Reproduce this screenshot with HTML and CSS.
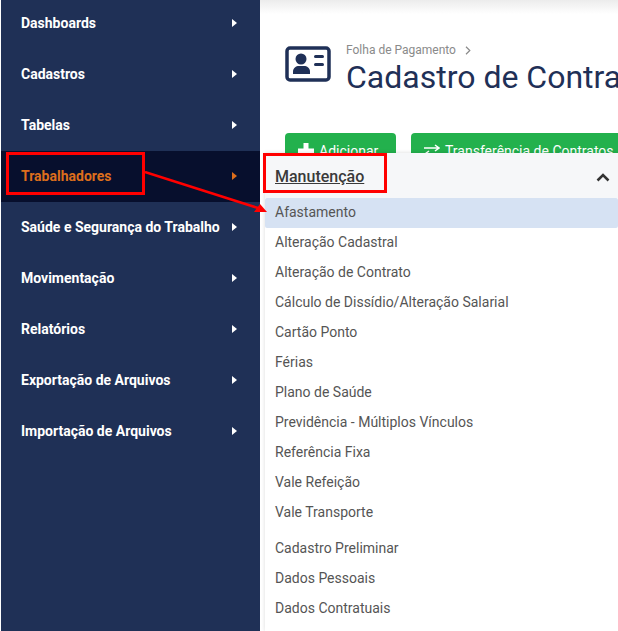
FILE: index.html
```html
<!DOCTYPE html>
<html lang="en">
<head>
  <meta charset="UTF-8" />
  <title>Cadastro de Contratos</title>
  <link rel="stylesheet" href="styles.css">
</head>
<body>
  <div class="page">
    <aside class="sidebar">
      <a class="side-item" href="#"><span>Dashboards</span><i class="caret"></i></a>
      <a class="side-item" href="#"><span>Cadastros</span><i class="caret"></i></a>
      <a class="side-item" href="#"><span>Tabelas</span><i class="caret"></i></a>
      <a class="side-item active" href="#"><span>Trabalhadores</span><i class="caret"></i></a>
      <a class="side-item" href="#"><span>Saúde e Segurança do Trabalho</span><i class="caret"></i></a>
      <a class="side-item" href="#"><span>Movimentação</span><i class="caret"></i></a>
      <a class="side-item" href="#"><span>Relatórios</span><i class="caret"></i></a>
      <a class="side-item" href="#"><span>Exportação de Arquivos</span><i class="caret"></i></a>
      <a class="side-item" href="#"><span>Importação de Arquivos</span><i class="caret"></i></a>
    </aside>

    <main class="content">
      <div class="topbar"></div>
      <div class="page-head">
        <svg class="head-icon" width="46" height="36" viewBox="0 0 46 36">
          <rect x="2" y="2" width="42" height="32" rx="3" fill="none" stroke="#1f3057" stroke-width="3.500"/>
          <circle cx="16" cy="13" r="5.500" fill="#1f3057"/>
          <path d="M8 28v-2.500c0-3.500 3-5.500 6-5.500h5c3 0 6 2 6 5.500V28z" fill="#1f3057"/>
          <rect x="29" y="9" width="10" height="3" rx="1.500" fill="#1f3057"/>
          <rect x="29" y="17" width="10" height="3" rx="1.500" fill="#1f3057"/>
        </svg>
        <div class="head-text">
          <div class="crumb">
            <span>Folha de Pagamento</span>
            <svg width="6" height="9" viewBox="0 0 6 9"><path d="M1 .8L4.800 4.500 1 8.200" fill="none" stroke="#8a8a8a" stroke-width="1.200"/></svg>
          </div>
          <h1>Cadastro de Contratos</h1>
        </div>
      </div>
      <div class="actions">
        <button class="btn btn-add">
          <svg width="16" height="16" viewBox="0 0 16 16"><path d="M8 0v16M0 8h16" stroke="#fff" stroke-width="5"/></svg>
          Adicionar
        </button>
        <button class="btn btn-transfer">
          <svg width="16" height="16" viewBox="0 0 16 16"><path d="M0 5h14M11 2l4 3-4 3M16 11H2M5 8l-4 3 4 3" fill="none" stroke="#fff" stroke-width="1.500"/></svg>
          Transferência de Contratos
        </button>
      </div>

      <div class="dropdown">
        <div class="drop-head">
          <span>Manutenção</span>
          <svg class="drop-chevron" width="14" height="9" viewBox="0 0 14 9"><path d="M1.500 7.500L7 2l5.500 5.500" fill="none" stroke="#333" stroke-width="2.500"/></svg>
        </div>
        <ul class="drop-list">
          <li class="selected">Afastamento</li>
          <li>Alteração Cadastral</li>
          <li>Alteração de Contrato</li>
          <li>Cálculo de Dissídio/Alteração Salarial</li>
          <li>Cartão Ponto</li>
          <li>Férias</li>
          <li>Plano de Saúde</li>
          <li>Previdência - Múltiplos Vínculos</li>
          <li>Referência Fixa</li>
          <li>Vale Refeição</li>
          <li>Vale Transporte</li>
        </ul>
        <ul class="drop-list second">
          <li>Cadastro Preliminar</li>
          <li>Dados Pessoais</li>
          <li>Dados Contratuais</li>
        </ul>
      </div>
    </main>
  </div>

  <!-- marcações vermelhas por cima da tela -->
  <div class="mark mark-side"></div>
  <div class="mark mark-drop"></div>
  <svg class="mark-arrow" width="130" height="50" viewBox="0 0 130 50">
    <path d="M1 1L114 37" fill="none" stroke="#f00" stroke-width="2.500"/>
    <path d="M123 41L110 41L116 33z" fill="#f00"/>
  </svg>
</body>
</html>
```

FILE: styles.css
```css
* {
  box-sizing: border-box;
}
body {
  margin: 0;
  font-family: Roboto, sans-serif;
  background: white;
  overflow: hidden;
}
.page {
  display: flex;
  height: 631px;
}
.sidebar {
  width: 259px;
  margin-left: 1px;
  flex: none;
  background: #1f3056;
}
.side-item {
  display: flex;
  justify-content: space-between;
  align-items: center;
  height: 51px;
  padding: 0 23px 2px 20px;
  color: white;
  font-size: 14px;
  font-weight: 700;
  text-decoration: none;
}
.side-item:first-child {
  height: 49px;
  padding-bottom: 3px;
}
.side-item.active {
  background: #070f2d;
  color: #dd6e1c;
}
.caret {
  width: 0;
  height: 0;
  border-left: 5px solid currentColor;
  border-top: 4px solid transparent;
  border-bottom: 4px solid transparent;
}
.content {
  flex: 1;
  min-width: 0;
  position: relative;
  overflow: hidden;
}
.topbar {
  height: 14px;
  background: linear-gradient(#ececec, #fff);
}
.page-head {
  display: flex;
  gap: 15px;
  margin: 29px 0 0 25px;
  height: 40px;
}
.head-icon {
  flex: none;
  margin-top: 3px;
}
.crumb {
  display: flex;
  align-items: center;
  gap: 9px;
  font-size: 12px;
  line-height: 14px;
  color: #8a8a8a;
}
h1 {
  margin: 1px 0 0;
  font-size: 32px;
  font-weight: 400;
  line-height: 38px;
  color: #1f3057;
  white-space: nowrap;
}
.actions {
  display: flex;
  gap: 15px;
  margin: 50px 0 0 25px;
}
.btn {
  display: flex;
  flex: none;
  align-items: center;
  gap: 5px;
  height: 36px;
  padding: 0 13px;
  border: none;
  border-radius: 4px;
  background: #23b14d;
  color: white;
  font-family: Roboto, sans-serif;
  font-size: 14px;
  white-space: nowrap;
}
.btn-add {
  width: 111px;
}
.dropdown {
  position: absolute;
  left: 5px;
  top: 153px;
  right: 0;
  bottom: 0;
  background: white;
  box-shadow: 0 0 4px rgba(0, 0, 0, 0.15);
}
.drop-head {
  display: flex;
  justify-content: space-between;
  align-items: center;
  height: 45px;
  padding: 1px 8px 0 10px;
  background: #f6f7f9;
  color: #3a3a3a;
  font-size: 16px;
  font-weight: 500;
}
.drop-head span {
  text-decoration: underline;
}
.drop-chevron {
  margin-top: 2px;
}
.drop-list {
  list-style: none;
  margin: 0;
  padding: 0;
}
.drop-list li {
  height: 30px;
  line-height: 28px;
  padding-left: 10px;
  font-size: 14px;
  color: #555;
}
.drop-list li.selected {
  background: #d6e2f3;
  border-radius: 2px;
}
.drop-list.second {
  margin-top: 6px;
}
.mark {
  position: absolute;
  border: 3px solid #f00;
}
.mark-side {
  left: 6px;
  top: 152px;
  width: 139px;
  height: 43px;
}
.mark-drop {
  left: 263px;
  top: 153px;
  width: 124px;
  height: 40px;
}
.mark-arrow {
  position: absolute;
  left: 144px;
  top: 171px;
}
```
